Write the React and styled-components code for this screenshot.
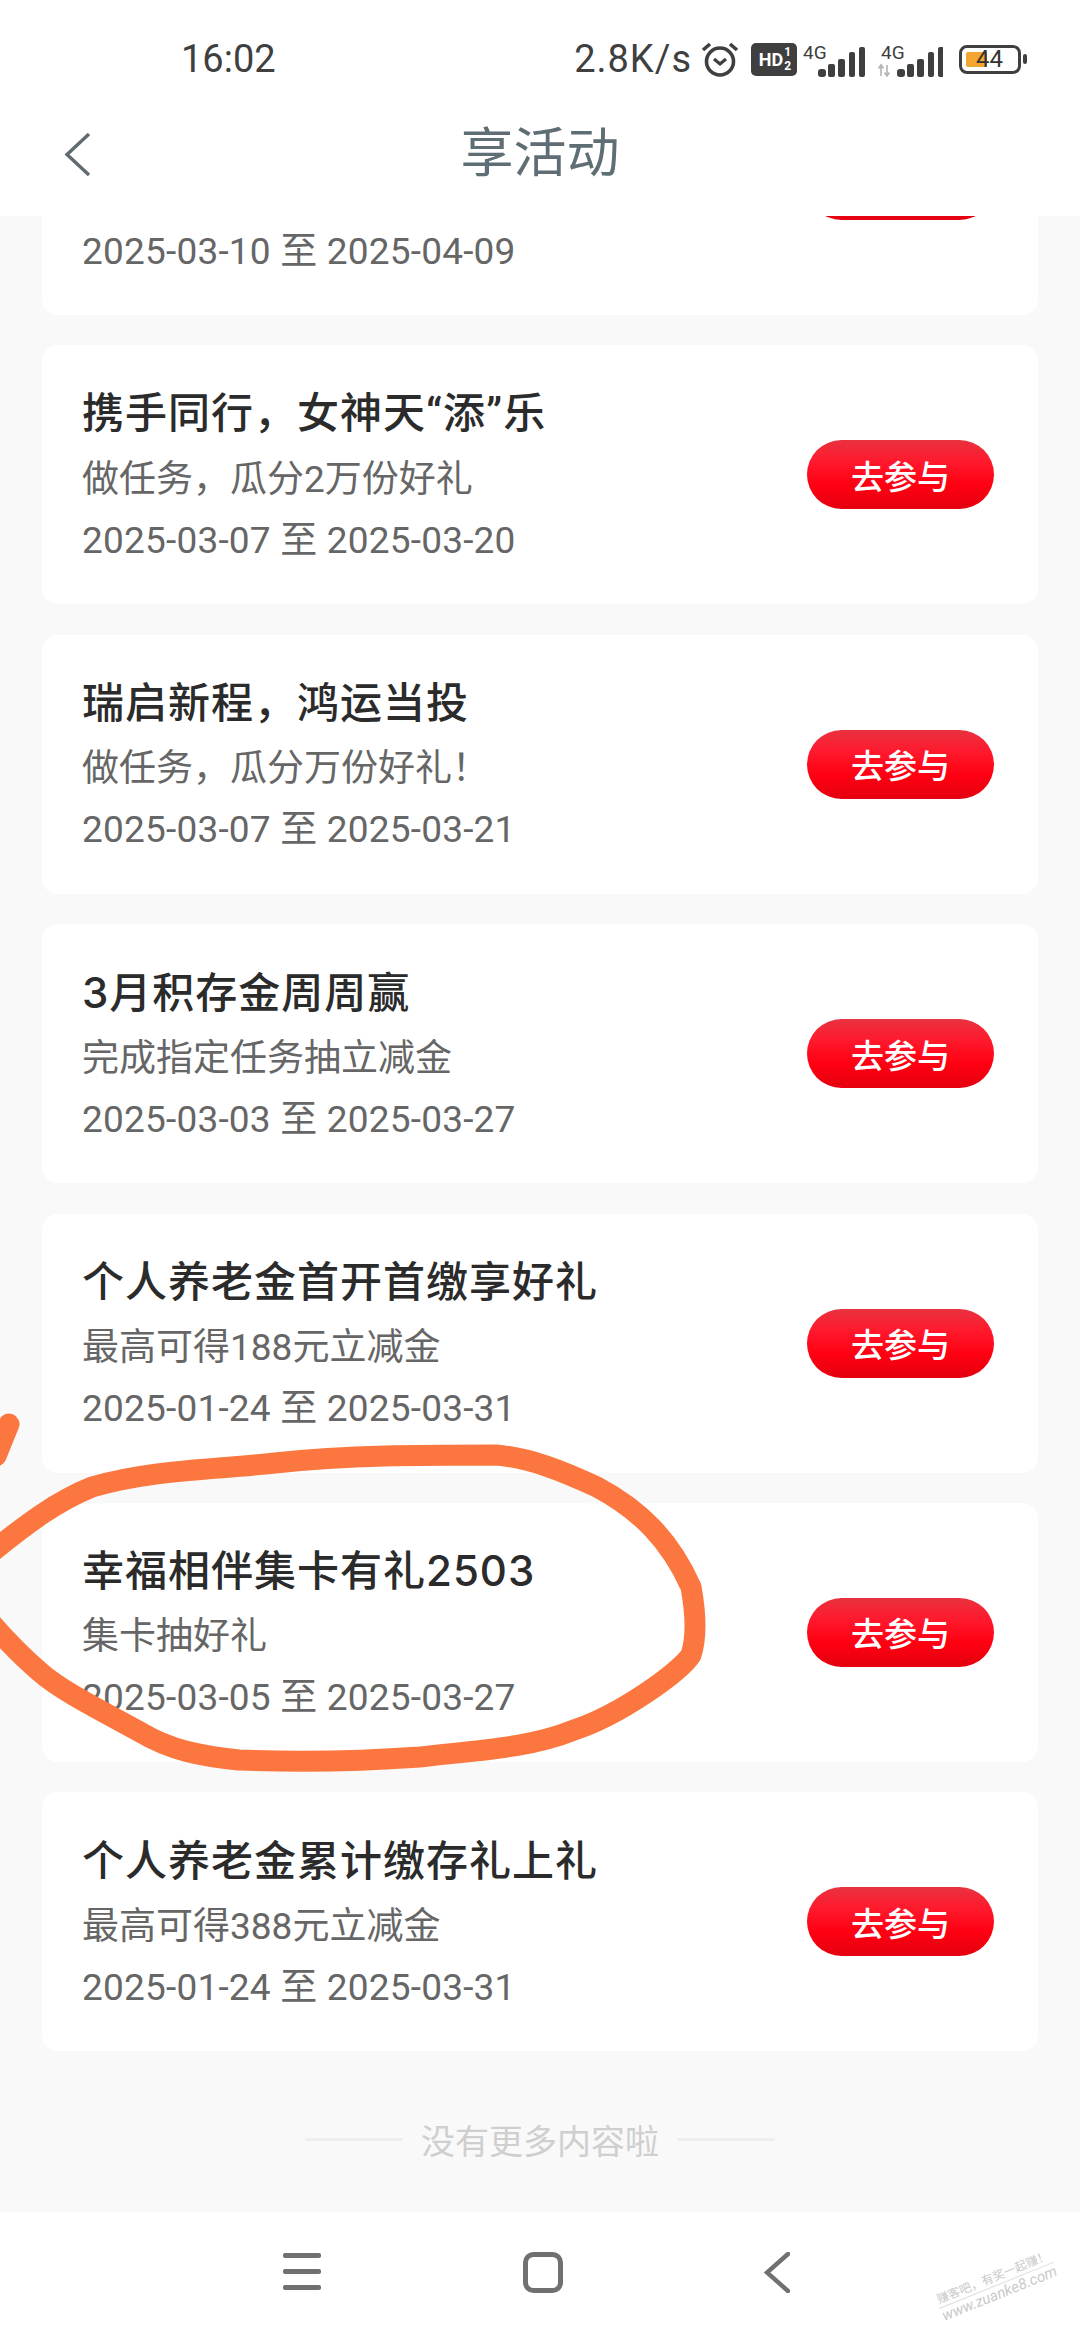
import React from "react"
import styled, { createGlobalStyle } from "styled-components"

const Quote = styled.span`
  font-family: Roboto, sans-serif;
`

const activities = [
  { title: "", desc: "", date: "2025-03-10 至 2025-04-09", clipped: true },
  {
    title: (
      <>
        携手同行，女神天<Quote>“</Quote>添<Quote>”</Quote>乐
      </>
    ),
    desc: "做任务，瓜分2万份好礼",
    date: "2025-03-07 至 2025-03-20",
  },
  { title: "瑞启新程，鸿运当投", desc: "做任务，瓜分万份好礼！", date: "2025-03-07 至 2025-03-21" },
  { title: "3月积存金周周赢", desc: "完成指定任务抽立减金", date: "2025-03-03 至 2025-03-27" },
  { title: "个人养老金首开首缴享好礼", desc: "最高可得188元立减金", date: "2025-01-24 至 2025-03-31" },
  { title: "幸福相伴集卡有礼2503", desc: "集卡抽好礼", date: "2025-03-05 至 2025-03-27" },
  { title: "个人养老金累计缴存礼上礼", desc: "最高可得388元立减金", date: "2025-01-24 至 2025-03-31" },
]

const BAR_COLOR = "#3f3f3f"

const Signal = ({ arrows }) => {
  const start = arrows ? 19 : 15
  const width = arrows ? 65 : 63
  return (
    <StatusItem $gap={arrows ? 12 : 6}>
      <svg width={width} height="36" viewBox={`0 0 ${width} 36`} display="block">
        <text x={arrows ? 3 : 0} y="18" fontSize="19" fill={BAR_COLOR} fontFamily="Roboto, sans-serif">4G</text>
        {arrows && <path d="M3 35V24M0.5 27.5L3 24l2.5 3.5M9 24v11M6.5 31.5L9 35l2.5-3.5" stroke="#b5b5b5" strokeWidth="1.6" fill="none" />}
        <rect x={start} y="28" width="8" height="8" rx="3" fill={BAR_COLOR} />
        <rect x={start + 10} y="23" width="7" height="13" rx="2" fill={BAR_COLOR} />
        <rect x={start + 20} y="18" width="7" height="18" rx="2" fill={BAR_COLOR} />
        <rect x={start + 31} y="11" width="6" height="25" rx="2" fill={BAR_COLOR} />
        <rect x={start + 41} y="6" width="6" height="30" rx="2" fill={BAR_COLOR} />
      </svg>
    </StatusItem>
  )
}

const App = () => (
  <Page>
    <GlobalStyle />
    <TopBar>
      <StatusBar>
        <Clock>16:02</Clock>
        <StatusRight>
          <Speed>2.8K/s</Speed>
          <StatusItem $gap={8}>
            <svg width="40" height="36" viewBox="0 0 40 36" fill="none" stroke={BAR_COLOR} display="block">
              <circle cx="20" cy="20.5" r="13.5" strokeWidth="3.6" />
              <path d="M14 18l6 5 6-5" strokeWidth="3.2" />
              <path d="M3 9l7-6M37 9l-7-6" strokeWidth="3.6" />
            </svg>
          </StatusItem>
          <HdBadge>
            HD
            <HdFraction>
              <span>1</span>
              <span>2</span>
            </HdFraction>
          </HdBadge>
          <Signal />
          <Signal arrows />
          <Battery>
            <BatteryFill />
            <BatteryText>44</BatteryText>
          </Battery>
          <BatteryNub />
        </StatusRight>
      </StatusBar>
      <Header>
        <BackIcon width="27" height="45" viewBox="0 0 27 45" fill="none" stroke="#5f6b70" strokeWidth="3.4">
          <path d="M25 2L3 22.5 25 43" />
        </BackIcon>
        <HeaderTitle>享活动</HeaderTitle>
      </Header>
    </TopBar>

    <Scroller>
      <List>
        {activities.map((item) => (
          <Card key={item.desc + item.date}>
            <CardText>
              <CardTitle>{item.title}</CardTitle>
              <CardDesc>{item.desc}</CardDesc>
              <CardDate>{item.date}</CardDate>
            </CardText>
            <JoinButton>{item.clipped ? "" : "去参与"}</JoinButton>
          </Card>
        ))}
        <Footer>
          <FooterLine />
          <span>没有更多内容啦</span>
          <FooterLine />
        </Footer>
      </List>
    </Scroller>

    <NavBar>
      <svg width="38" height="38" viewBox="0 0 38 38" fill="#707070">
        <rect x="0" y="0" width="38" height="5" rx="2" />
        <rect x="0" y="16" width="38" height="5" rx="2" />
        <rect x="0" y="32" width="38" height="5" rx="2" />
      </svg>
      <svg width="40" height="41" viewBox="0 0 40 41" fill="none" stroke="#707070" strokeWidth="5">
        <rect x="2.5" y="2.5" width="35" height="36" rx="8" />
      </svg>
      <svg width="26" height="41" viewBox="0 0 26 41" fill="none" stroke="#707070" strokeWidth="4.4" strokeLinecap="round">
        <path d="M24 2L3 20.5 24 39" />
      </svg>
    </NavBar>

    <Scribble viewBox="0 0 1080 2340" fill="none" stroke="#fb773f" strokeWidth="21" strokeLinecap="round" strokeLinejoin="round">
      <path d="M-20 1562C30 1520 60 1500 92 1487C150 1470 210 1470 275 1463C350 1455 420 1455 496 1455C530 1458 560 1470 597 1487C640 1510 670 1540 691 1587C697 1620 696 1640 691 1655C680 1672 620 1715 574 1730C530 1748 480 1750 420 1757C350 1762 290 1762 239 1760C200 1756 170 1750 140 1732C100 1710 60 1690 40 1672C20 1655 5 1640 -20 1610" />
      <path d="M9 1424L-4 1456" />
    </Scribble>

    <Watermark>
      <div>赚客吧，有奖一起赚！</div>
      <WatermarkUrl>www.zuanke8.com</WatermarkUrl>
    </Watermark>
  </Page>
)

export default App

const GlobalStyle = createGlobalStyle`
  html, body {
    margin: 0;
    padding: 0;
    background: #f9f9f9;
  }
  * {
    box-sizing: border-box;
  }
`

const Page = styled.div`
  position: relative;
  display: flex;
  flex-direction: column;
  width: 1080px;
  height: 2340px;
  overflow: hidden;
  background: #f9f9f9;
  font-family: Roboto, "Noto Sans CJK SC", sans-serif;
`

const TopBar = styled.div`
  position: relative;
  z-index: 1;
  height: 216px;
  flex-shrink: 0;
  background: #fff;
`

const StatusBar = styled.div`
  display: flex;
  justify-content: space-between;
  align-items: center;
  height: 118px;
  padding: 0 53px 0 181px;
`

const Clock = styled.div`
  font-size: 38px;
  color: #3f3f3f;
`

const StatusRight = styled.div`
  display: flex;
  align-items: center;
`

const StatusItem = styled.div`
  margin-left: ${(p) => p.$gap}px;
`

const Speed = styled.div`
  font-size: 38px;
  letter-spacing: 1px;
  color: #3f3f3f;
`

const HdBadge = styled.div`
  display: flex;
  align-items: center;
  justify-content: center;
  width: 46px;
  height: 33px;
  margin-left: 11px;
  padding-left: 2px;
  border-radius: 5px;
  background: #3f3f3f;
  color: #fff;
  font-size: 18px;
  font-weight: 700;
`

const HdFraction = styled.div`
  display: flex;
  flex-direction: column;
  margin-left: 1px;
  font-size: 12px;
  line-height: 14px;
`

const Battery = styled.div`
  position: relative;
  width: 62px;
  height: 29px;
  margin-left: 16px;
  border: 3px solid #3f3f3f;
  border-radius: 8px;
`

const BatteryFill = styled.div`
  position: absolute;
  left: 4px;
  top: 4px;
  bottom: 4px;
  width: 21px;
  border-radius: 2px;
  background: #f3a52f;
`

const BatteryText = styled.div`
  position: absolute;
  left: 14px;
  top: -4px;
  font-size: 24px;
  line-height: 30px;
  color: #333;
`

const BatteryNub = styled.div`
  width: 4px;
  height: 10px;
  margin-left: 2px;
  border-radius: 2px;
  background: #3f3f3f;
`

const Header = styled.div`
  position: relative;
  display: flex;
  justify-content: center;
  align-items: center;
  height: 98px;
  margin-top: -16px;
  padding-bottom: 4px;
`

const BackIcon = styled.svg`
  position: absolute;
  left: 64px;
  top: 30px;
`

const HeaderTitle = styled.div`
  font-size: 53px;
  color: #5f6e75;
`

const Scroller = styled.div`
  flex: 1;
  min-height: 0;
  overflow: hidden;
`

const List = styled.div`
  display: flex;
  flex-direction: column;
  gap: 30.4px;
  margin-top: -160px;
  padding: 0 42px;
`

const Card = styled.div`
  display: flex;
  align-items: center;
  justify-content: space-between;
  height: 259px;
  padding: 0 44px 0 40px;
  border-radius: 16px;
  background: #fff;
`

const CardText = styled.div`
  display: flex;
  flex-direction: column;
`

const CardTitle = styled.div`
  min-height: 68px;
  font-family: Inter, "Noto Sans CJK SC", sans-serif;
  font-size: 42px;
  line-height: 68px;
  font-weight: 500;
  letter-spacing: 1px;
  color: #2b2b2b;
`

const CardDesc = styled.div`
  min-height: 64px;
  font-size: 37px;
  line-height: 64px;
  color: #666;
`

const CardDate = styled.div`
  font-size: 37px;
  line-height: 58px;
  letter-spacing: 0.2px;
  color: #666;
`

const JoinButton = styled.div`
  display: flex;
  align-items: center;
  justify-content: center;
  width: 187px;
  height: 69px;
  border-radius: 35px;
  background: linear-gradient(180deg, #e8323f 0%, #ff1a2e 30%, #ff0012 65%, #e4000f 100%);
  color: #fff;
  font-size: 33px;
  font-weight: 500;
`

const Footer = styled.div`
  display: flex;
  justify-content: center;
  align-items: center;
  gap: 18px;
  height: 116px;
  font-size: 34px;
  color: #cfcfcf;
`

const FooterLine = styled.div`
  width: 98px;
  height: 3px;
  background: #efefef;
`

const NavBar = styled.div`
  display: flex;
  justify-content: space-between;
  align-items: center;
  height: 128px;
  flex-shrink: 0;
  padding: 0 290px 8px 283px;
  background: #fff;
`

const Scribble = styled.svg`
  position: absolute;
  left: 0;
  top: 0;
  width: 1080px;
  height: 2340px;
  z-index: 2;
  pointer-events: none;
`

const Watermark = styled.div`
  position: absolute;
  z-index: 3;
  right: 22px;
  bottom: 38px;
  transform: rotate(-22deg);
  font-size: 12px;
  line-height: 16px;
  color: #c9c9c9;
  white-space: nowrap;
  text-align: center;
`

const WatermarkUrl = styled.div`
  border-top: 1px solid #dcdcdc;
  font-size: 15px;
  font-style: italic;
`
